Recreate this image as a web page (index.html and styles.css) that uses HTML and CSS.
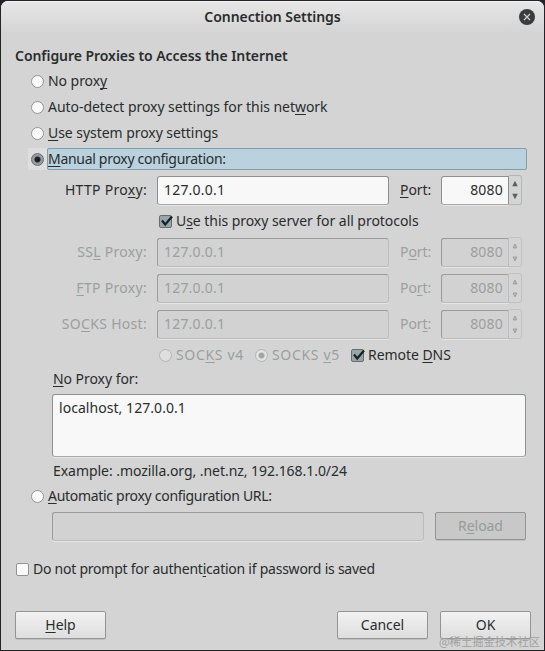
FILE: index.html
```
<!DOCTYPE html>
<html lang="en">
<head>
    <meta charset="UTF-8">
    <meta name="viewport" content="width=device-width, initial-scale=1.0">
    <title>Connection Settings</title>
    <link rel="stylesheet" href="styles.css">
</head>
<body>
    <div class="window">
        <div class="titlebar">
            <span class="title">Connection Settings</span>
            <svg class="close" width="16" height="16" viewBox="0 0 16 16">
                <circle cx="8" cy="8" r="8" fill="#3a3d3e"/>
                <path d="M5 5l6 6M11 5l-6 6" stroke="#cfcfcf" stroke-width="1.3"/>
            </svg>
        </div>

        <div class="content">
            <h1>Configure Proxies to Access the Internet</h1>

            <label class="option"><span class="radio"></span><span class="text">No prox<u>y</u></span></label>
            <label class="option"><span class="radio"></span><span class="text">Auto-detect proxy settings for this net<u>w</u>ork</span></label>
            <label class="option"><span class="radio"></span><span class="text"><u>U</u>se system proxy settings</span></label>
            <label class="option selected"><span class="radio checked"></span><span class="text"><u>M</u>anual proxy configuration:</span></label>

            <div class="server">
                <span class="name">HTTP Pro<u>x</u>y:</span>
                <input class="field" type="text" value="127.0.0.1">
                <span class="port"><u>P</u>ort:</span>
                <input class="field number" type="text" value="8080">
                <svg class="spinner" width="13" height="30" viewBox="0 0 13 30">
                    <path d="M3.500 11h6L6.500 5zM3.500 19h6L6.500 25z"/>
                </svg>
            </div>

            <label class="check-row all-protocols">
                <svg class="check" width="16" height="16" viewBox="0 0 16 16">
                    <rect class="check-box" x="1.500" y="2.500" width="12" height="12" rx="1.500"/>
                    <path class="check-mark" d="M4 7.500l3.200 4L14 3.500"/>
                </svg>
                <span class="text">U<u>s</u>e this proxy server for all protocols</span>
            </label>

            <div class="server disabled">
                <span class="name">SS<u>L</u> Proxy:</span>
                <input class="field" type="text" value="127.0.0.1" disabled>
                <span class="port">P<u>o</u>rt:</span>
                <input class="field number" type="text" value="8080" disabled>
                <svg class="spinner" width="13" height="30" viewBox="0 0 13 30">
                    <path d="M4.500 10.500h4L6.500 6.500zM4.500 20.500h4L6.500 24.500z"/>
                </svg>
            </div>
            <div class="server disabled">
                <span class="name"><u>F</u>TP Proxy:</span>
                <input class="field" type="text" value="127.0.0.1" disabled>
                <span class="port">Po<u>r</u>t:</span>
                <input class="field number" type="text" value="8080" disabled>
                <svg class="spinner" width="13" height="30" viewBox="0 0 13 30">
                    <path d="M4.500 10.500h4L6.500 6.500zM4.500 20.500h4L6.500 24.500z"/>
                </svg>
            </div>
            <div class="server disabled">
                <span class="name">SO<u>C</u>KS Host:</span>
                <input class="field" type="text" value="127.0.0.1" disabled>
                <span class="port">Por<u>t</u>:</span>
                <input class="field number" type="text" value="8080" disabled>
                <svg class="spinner" width="13" height="30" viewBox="0 0 13 30">
                    <path d="M4.500 10.500h4L6.500 6.500zM4.500 20.500h4L6.500 24.500z"/>
                </svg>
            </div>

            <div class="socks">
                <label class="version disabled"><span class="radio"></span><span class="text">SOC<u>K</u>S v4</span></label>
                <label class="version disabled"><span class="radio checked"></span><span class="text">SOCKS <u>v</u>5</span></label>
                <label class="check-row">
                    <svg class="check" width="16" height="16" viewBox="0 0 16 16">
                        <rect class="check-box" x="1.500" y="2.500" width="12" height="12" rx="1.500"/>
                        <path class="check-mark" d="M4 7.500l3.200 4L14 3.500"/>
                    </svg>
                    <span class="text">Remote <u>D</u>NS</span>
                </label>
            </div>

            <div class="no-proxy">
                <span class="no-proxy-label"><u>N</u>o Proxy for:</span>
                <textarea class="field">localhost, 127.0.0.1</textarea>
                <span class="example">Example: .mozilla.org, .net.nz, 192.168.1.0/24</span>
            </div>

            <label class="option automatic"><span class="radio"></span><span class="text"><u>A</u>utomatic proxy configuration URL:</span></label>
            <div class="url-row">
                <input class="field" type="text" disabled>
                <button class="button" disabled>R<u>e</u>load</button>
            </div>

            <label class="check-row auth">
                <span class="empty-box"></span>
                <span class="text">Do not prompt for authent<u>i</u>cation if password is saved</span>
            </label>

            <div class="buttons">
                <button class="button help"><u>H</u>elp</button>
                <button class="button">Cancel</button>
                <button class="button ok">OK</button>
            </div>
        </div>
        <span class="watermark">@稀土掘金技术社区</span>
    </div>
</body>
</html>
```
FILE: styles.css
```
* {
    box-sizing: border-box;
}

body {
    margin: 0;
    height: 651px;
    overflow: hidden;
    background-color: #242227;
    color: #2a2d2d;
    font-family: 'Noto Sans', 'Open Sans', sans-serif;
    font-size: 14px;
    letter-spacing: -0.05px;
    line-height: 20px;
    white-space: nowrap;
}

u {
    text-underline-offset: 2px;
    text-decoration-thickness: 1px;
    text-decoration-skip-ink: none;
}

.window {
    position: relative;
    width: 543px;
    height: 649px;
    margin: 1px;
    background-color: #d4d4d4;
    border-radius: 7px 7px 0 0;
}

.titlebar {
    display: flex;
    align-items: center;
    height: 32px;
    padding: 0 9px 2px 25px;
    background: linear-gradient(#e6e6e6, #d4d4d4);
    border-top: 1px solid #f5f5f5;
    border-radius: 7px 7px 0 0;
}

.title {
    flex: 1;
    text-align: center;
    font-weight: 600;
}

.content {
    padding: 13px 17px 0 14px;
}

h1 {
    margin: 0 0 4px;
    font-size: 14px;
    font-weight: 600;
    line-height: 20px;
}

.option {
    display: flex;
    align-items: center;
    height: 22px;
    margin: 0 0 4px 13px;
    padding-left: 3px;
}

.option .text {
    flex: 1;
    margin-left: 3px;
    border: 1px solid transparent;
    line-height: 20px;
}

.option.selected {
    margin-bottom: 5px;
    padding-left: 0;
    background: linear-gradient(90deg, #dedede 19px, transparent 19px);
}

.option.selected .radio {
    margin-left: 3px;
}

.option.selected .text {
    background-color: #b9d2dd;
    border-color: #819db0;
    border-radius: 2px;
}

.option.selected .text,
.automatic .text {
    letter-spacing: -0.3px;
}

.radio {
    width: 13px;
    height: 13px;
    border: 1px solid #919595;
    border-radius: 50%;
    background-color: #fafafa;
}

.radio.checked {
    border-color: #666c6d;
    background: radial-gradient(circle, #1d2021 2.5px, #949c9d 3.5px);
}

.server {
    display: flex;
    align-items: center;
    height: 30px;
    margin-bottom: 6px;
}

.name {
    width: 132px;
    margin-right: 10px;
    text-align: right;
    letter-spacing: 0.3px;
}

.port {
    width: 41px;
    margin-left: 11px;
}

.field {
    width: 232px;
    height: 29px;
    margin: 0;
    padding: 0 6px 2px;
    border: 1px solid #8c9190;
    border-bottom-color: #a6a9a8;
    border-radius: 3px;
    outline: none;
    background-color: #f8f8f8;
    box-shadow: 0 1px 0 #e5e5e5;
    color: inherit;
    font: inherit;
    letter-spacing: 0.2px;
}

.field:disabled {
    background-color: #d2d2d2;
    border-color: #999c9b #bbbdbc #bbbdbc #999c9b;
}

.number {
    width: 68px;
    padding-right: 5px;
    border-radius: 3px 0 0 3px;
    text-align: right;
}

.spinner {
    border: 1px solid #b4b6b5;
    border-left: none;
    border-radius: 0 3px 3px 0;
    fill: #5c6060;
}

.disabled {
    color: #9b9f9e;
}

.disabled .spinner {
    border-color: #c1c3c2;
    fill: #c5c7c6;
    stroke: #929695;
    stroke-width: 1;
}

.disabled .radio {
    border-color: #b3b6b5;
    background-color: #dedede;
}

.disabled .radio.checked {
    background: radial-gradient(circle, #a2a5a4 2.5px, #e2e2e2 3.5px);
}

.check-row {
    display: flex;
    align-items: center;
    height: 22px;
}

.check-row .text {
    margin-left: 1px;
}

.all-protocols {
    margin: -1px 0 5px 143px;
}

.check-box {
    fill: #9aa5a9;
    stroke: #646d70;
}

.check-mark {
    fill: none;
    stroke: #17202a;
    stroke-width: 2.2;
}

.all-protocols .text {
    margin-left: 2px;
}

.socks {
    display: flex;
    margin: -1px 0 0 144px;
}

.version {
    display: flex;
    align-items: center;
    width: 96px;
    height: 22px;
}

.version + .check-row {
    margin-left: -1px;
}

.socks .check-row .text {
    margin-left: 2px;
}

.version .text {
    margin-left: 4px;
    letter-spacing: 0.65px;
}

.no-proxy {
    display: flex;
    flex-direction: column;
    margin: 3px 4px 4px 37px;
}

.no-proxy-label,
.example {
    margin-left: 1px;
}

textarea.field {
    width: 474px;
    height: 63px;
    margin: 5px 0 4px;
    padding: 3px 6px;
    resize: none;
    letter-spacing: 0.05px;
}

.automatic {
    margin-bottom: 5px;
}

.url-row {
    display: flex;
    margin: 0 1px 17px 37px;
}

.url-row .field {
    width: 372px;
    margin-right: 11px;
}

.button {
    width: 91px;
    height: 28px;
    padding: 0;
    border: 1px solid #929594;
    border-radius: 2px;
    background: linear-gradient(#f2f2f2, #dedede);
    box-shadow: 0 1px 0 #c0c0c0;
    color: inherit;
    font: inherit;
    letter-spacing: inherit;
}

.button:disabled {
    background: #c8c8c8;
    color: #979b9a;
}

.auth {
    letter-spacing: -0.24px;
}

.empty-box {
    width: 13px;
    height: 13px;
    margin: 0 3px 0 1px;
    border: 1px solid #929594;
    border-radius: 2px;
    background-color: #fafafa;
}

.buttons {
    display: flex;
    margin-top: 31px;
}

.help {
    margin-right: auto;
}

.ok {
    margin: 0 -4px 0 12px;
}

.watermark {
    position: absolute;
    right: 4px;
    bottom: 3px;
    color: #a0a0a0;
    font-family: 'Noto Sans CJK SC', sans-serif;
    font-size: 11.3px;
    letter-spacing: 0;
    line-height: 12px;
}
```
